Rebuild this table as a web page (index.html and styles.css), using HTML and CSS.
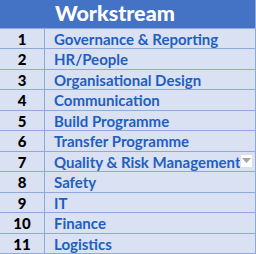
FILE: index.html
```html
<!DOCTYPE html>
<html>
<head>
<meta charset="utf-8">
<link rel="stylesheet" href="styles.css">
</head>
<body>
<div class="table">
  <div class="head"><div class="hnum"></div><div class="htitle">Workstream</div></div>
  <div class="row"><div class="num">1</div><div class="name">Governance &amp; Reporting</div></div>
  <div class="row"><div class="num">2</div><div class="name">HR/People</div></div>
  <div class="row"><div class="num">3</div><div class="name">Organisational Design</div></div>
  <div class="row"><div class="num">4</div><div class="name">Communication</div></div>
  <div class="row"><div class="num">5</div><div class="name">Build Programme</div></div>
  <div class="row"><div class="num">6</div><div class="name">Transfer Programme</div></div>
  <div class="row"><div class="num">7</div><div class="name">Quality &amp; Risk Management<span class="dd"><svg width="9" height="5" viewBox="0 0 9 5"><path d="M0 0H9L4.5 5Z" fill="#a6a6a6"/></svg></span></div></div>
  <div class="row"><div class="num">8</div><div class="name">Safety</div></div>
  <div class="row"><div class="num">9</div><div class="name">IT</div></div>
  <div class="row"><div class="num">10</div><div class="name">Finance</div></div>
  <div class="row"><div class="num">11</div><div class="name">Logistics</div></div>
</div>
</body>
</html>
```
FILE: styles.css
```css
html, body { margin: 0; padding: 0; background: #fff; }
.table {
  width: 255px;
  border-right: 1px solid #8ea9db;
  font-family: Lato, "Liberation Sans", sans-serif;
  font-weight: 700;
}
.head {
  display: flex;
  height: 27.5px;
  background: #4472c4;
  border-bottom: 1px solid #8ea9db;
}
.hnum { width: 45px; }
.htitle {
  color: #fff;
  font-size: 21.5px;
  font-weight: 900;
  line-height: 27px;
  padding-left: 10px;
}
.row {
  display: flex;
  height: 19.5px;
  background: #d9e1f2;
  border-bottom: 1px solid #8ea9db;
}
.num {
  width: 44px;
  border-right: 1px solid #8ea9db;
  text-align: center;
  color: #000;
  font-size: 15px;
  font-weight: 900;
  line-height: 20px;
}
.name {
  flex: 1;
  position: relative;
  color: #1f5fc0;
  font-size: 15px;
  line-height: 20px;
  padding-left: 9px;
  white-space: nowrap;
}
.dd {
  position: absolute;
  right: 2px;
  top: 2px;
  width: 13px;
  height: 14px;
  background: #fff;
  border: 1px solid #e0e0e0;
  box-sizing: border-box;
  display: flex;
  align-items: center;
  justify-content: center;
}
```
